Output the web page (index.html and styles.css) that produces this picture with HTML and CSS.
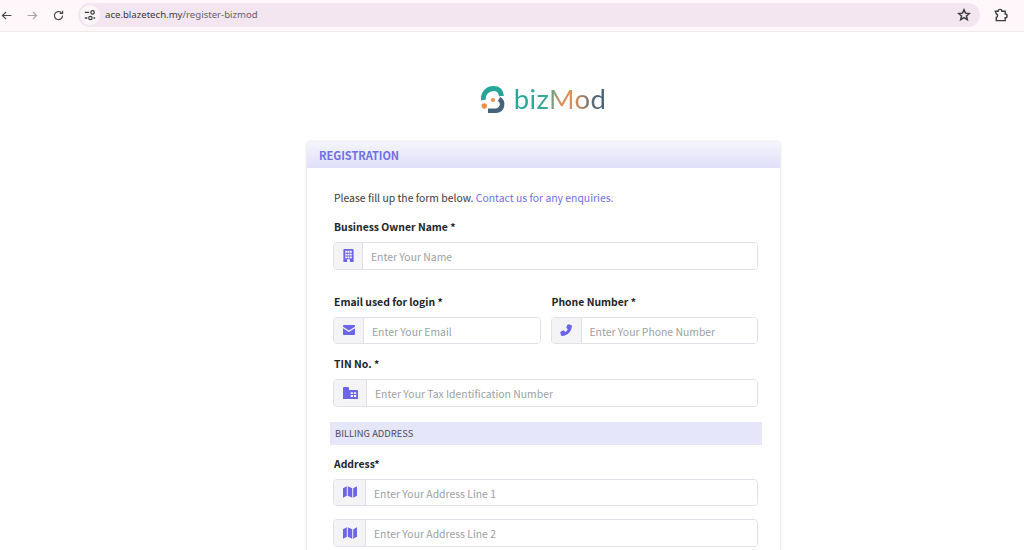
FILE: index.html
```html
<!DOCTYPE html>
<html lang="en">
<head>
  <meta charset="UTF-8">
  <meta name="viewport" content="width=device-width, initial-scale=1.0">
  <title>bizMod Registration</title>
  <link rel="stylesheet" href="styles.css">
</head>
<body>
  <!-- Browser toolbar -->
  <header class="toolbar">
    <svg class="nav-icon" viewBox="0 0 16 16"><path d="M14 8H3M7.500 3.500 3 8l4.500 4.500" fill="none" stroke="#474747" stroke-width="1.500"/></svg>
    <svg class="nav-icon" viewBox="0 0 16 16"><path d="M2 8h11M8.500 3.500 13 8l-4.500 4.500" fill="none" stroke="#a9a5a8" stroke-width="1.500"/></svg>
    <svg class="nav-icon" viewBox="0 0 16 16"><path d="M13 8a5 5 0 1 1-1.500-3.500M13 2v3.500H9.500" fill="none" stroke="#474747" stroke-width="1.500"/></svg>
    <div class="omnibox">
      <span class="site-info">
        <svg viewBox="0 0 14 14" width="12" height="12"><path d="M1 4h5M1 10.500h3M11 10.500h2" stroke="#3c3c3c" stroke-width="1.500" fill="none"/><circle cx="10" cy="4" r="2" fill="none" stroke="#3c3c3c" stroke-width="1.400"/><circle cx="7.500" cy="10.500" r="2" fill="none" stroke="#3c3c3c" stroke-width="1.400"/></svg>
      </span>
      <span class="url">ace.blazetech.my<span class="url-path">/register-bizmod</span></span>
      <svg class="star" viewBox="0 0 16 16" width="14" height="14"><path d="m8 2 1.700 3.900 4.300.4-3.200 2.800 1 4.200L8 11.100l-3.800 2.200 1-4.200L2 6.300l4.300-.4z" fill="none" stroke="#3c3c3c" stroke-width="1.700"/></svg>
    </div>
    <svg class="ext-icon" viewBox="0 0 16 16" width="15" height="15"><path d="M2.500 4.500h3a2 2 0 0 1 4 0h3.500v3a2 2 0 0 1 0 4v3H3.500v-3.500a1.800 1.800 0 0 0 0-3.500z" fill="none" stroke="#3c3c3c" stroke-width="1.500"/></svg>
  </header>

  <main class="page">
    <!-- Logo -->
    <div class="logo">
      <svg class="logo-mark" viewBox="0 0 25 27" width="25" height="27">
        <path d="M2.500 14A10 10 0 0 1 12.500 2.500C17 2.500 20 5 20.500 10" fill="none" stroke="#26a69a" stroke-width="5"/>
        <path d="M7 24.700H15.500A6.300 6.300 0 0 0 18 13" fill="none" stroke="#45647c" stroke-width="4.600"/>
        <circle cx="12" cy="14" r="2.100" fill="#ee8f45"/>
        <circle cx="3.300" cy="20" r="2.700" fill="#ee8f45"/>
      </svg>
      <span class="logo-text">bizMod</span>
    </div>

    <!-- Registration card -->
    <section class="card">
      <h2 class="card-title">REGISTRATION</h2>
      <div class="card-body">
        <p class="intro">Please fill up the form below. <a href="#">Contact us for any enquiries.</a></p>

        <div class="field name-field">
          <label>Business Owner Name *</label>
          <div class="input-group">
            <span class="addon"><svg viewBox="0 0 11 14" width="11" height="13"><path fill-rule="evenodd" d="M1 0h9a1 1 0 0 1 1 1v13H7v-3H4v3H0V1a1 1 0 0 1 1-1zm1 2v2h2V2zm2.500 0v2h2V2zM7 2v2h2V2zM2 5v2h2V5zm2.500 0v2h2V5zM7 5v2h2V5zM2 8v2h2V8zm2.500 0v2h2V8zM7 8v2h2V8z"/></svg></span>
            <input type="text" placeholder="Enter Your Name">
          </div>
        </div>

        <div class="field-row">
          <div class="field">
            <label>Email used for login *</label>
            <div class="input-group">
              <span class="addon"><svg viewBox="0 0 12 10" width="12" height="10"><path d="M1 0h10a1 1 0 0 1 1 1v.8L6 5.600 0 1.800V1a1 1 0 0 1 1-1zM0 3.200l6 3.800 6-3.800V9a1 1 0 0 1-1 1H1a1 1 0 0 1-1-1z"/></svg></span>
              <input type="text" placeholder="Enter Your Email">
            </div>
          </div>
          <div class="field">
            <label>Phone Number *</label>
            <div class="input-group">
              <span class="addon"><svg viewBox="0 0 12 12" width="12" height="12"><path d="M8.300.3 11 .9c.6.2 1 .7.9 1.300C11.500 7.500 7.500 11.600 2.200 12c-.6 0-1.100-.3-1.300-.9L.3 8.500c-.1-.4.100-.8.500-1l2.500-1.100c.3-.1.700 0 .9.300l1.100 1.300a8 8 0 0 0 2.600-2.700L6.600 4.200a.8.800 0 0 1-.2-.9L7.400.8c.2-.4.500-.6.900-.5z"/></svg></span>
              <input type="text" placeholder="Enter Your Phone Number">
            </div>
          </div>
        </div>

        <div class="field">
          <label>TIN No. *</label>
          <div class="input-group">
            <span class="addon"><svg viewBox="0 0 15 12" width="15" height="12"><path fill-rule="evenodd" d="M1 0h4a1 1 0 0 1 1 1v2h8a1 1 0 0 1 1 1v8H0V1a1 1 0 0 1 1-1zm6.700 5.200v1.900h2.200V5.200zm3.200 0v1.900h2.300V5.200zM7.700 8v1.900h2.200V8zm3.200 0v1.900h2.300V8z"/></svg></span>
            <input type="text" placeholder="Enter Your Tax Identification Number">
          </div>
        </div>

        <div class="section-bar">BILLING ADDRESS</div>

        <div class="field">
          <label>Address*</label>
          <div class="input-group">
            <span class="addon"><svg viewBox="0 0 14 12" width="14" height="12"><path d="M0 2.200 3.800.3v9.500L0 11.700zM4.800.3l4.400 1.900v9.500L4.800 9.800zM10.200 2.200 14 .3v9.500l-3.800 1.900z"/></svg></span>
            <input type="text" placeholder="Enter Your Address Line 1">
          </div>
          <div class="input-group second-line">
            <span class="addon"><svg viewBox="0 0 14 12" width="14" height="12"><path d="M0 2.200 3.800.3v9.500L0 11.700zM4.800.3l4.400 1.900v9.500L4.800 9.800zM10.200 2.200 14 .3v9.500l-3.800 1.900z"/></svg></span>
            <input type="text" placeholder="Enter Your Address Line 2">
          </div>
        </div>
      </div>
    </section>
  </main>
</body>
</html>
```

FILE: styles.css
```css
/* General Styles */
html,
body {
  height: 550px;
  overflow: hidden;
}

body {
  margin: 0;
  background: #fff;
  color: #212529;
  font-family: "Noto Sans CJK SC", "Open Sans", sans-serif;
  font-size: 10.4px;
}

/* Browser toolbar */
.toolbar {
  display: flex;
  align-items: center;
  height: 31px;
  padding: 0 16px 0 0;
  background: #fff7f9;
  border-bottom: 1px solid #f1e8ec;
}

.nav-icon {
  width: 13px;
  height: 13px;
  margin-right: 13px;
}

.omnibox {
  display: flex;
  align-items: center;
  flex: 1;
  height: 24px;
  margin-top: -2px;
  padding: 0 9px 0 2px;
  background: #f3e6f0;
  border-radius: 12px;
}

.site-info {
  display: flex;
  align-items: center;
  justify-content: center;
  width: 20px;
  height: 20px;
  background: #fdf6f9;
  border-radius: 50%;
}

.url {
  flex: 1;
  margin-left: 5px;
  font-family: "Noto Sans", sans-serif;
  font-size: 9.6px;
  color: #3a3a3a;
  line-height: 16px;
}

.url-path {
  color: #66626a;
}

.ext-icon {
  margin: -2px 0 0 13px;
}

/* Page offset */
.page {
  padding-left: 63px;
}

/* Logo */
.logo {
  display: flex;
  align-items: center;
  justify-content: center;
  gap: 8px;
  height: 30px;
  margin-top: 52px;
}

.logo-text {
  font-family: "Lato", sans-serif;
  font-size: 27.5px;
  line-height: 30px;
  letter-spacing: 0.4px;
  background: linear-gradient(90deg, #26a69a 0%, #3aa898 36%, #e0905a 52%, #d8915a 66%, #45647c 90%);
  -webkit-background-clip: text;
  background-clip: text;
  color: transparent;
}

/* Registration card */
.card {
  width: 473px;
  height: 500px;
  margin: 28px auto 0;
  background: #fff;
  border-radius: 4px;
  box-shadow: 0 0 3px rgba(60, 60, 90, 0.25);
}

.card-title {
  margin: 0;
  height: 26px;
  padding: 0 12px;
  background: linear-gradient(#f5f5fd, #dfdff8);
  border-radius: 4px 4px 0 0;
  color: #6f6fe6;
  font-size: 11px;
  font-weight: 700;
  line-height: 26px;
}

.card-body {
  padding: 20px 23px 0 27px;
}

.intro {
  margin: 0 0 9px;
  font-size: 10.4px;
  line-height: 20px;
  color: #3a3a3a;
}

.intro a {
  color: #6f6fe6;
  text-decoration: none;
}

/* Form fields */
.field label {
  display: block;
  margin-bottom: 5px;
  font-size: 10.4px;
  font-weight: 700;
  line-height: 20px;
  color: #212529;
}

.name-field {
  margin-bottom: 22px;
}

.field-row {
  display: grid;
  grid-template-columns: 1fr 1fr;
  gap: 12px;
  margin-bottom: 10px;
}

.input-group {
  display: flex;
  height: 27.5px;
  margin: 0 -1px;
  box-sizing: border-box;
  border: 1px solid #dee2e6;
  border-radius: 4px;
  overflow: hidden;
}

.input-group.second-line {
  margin-top: 13px;
}

.addon {
  display: flex;
  align-items: center;
  padding: 0 8.500px;
  background: #f4f4f6;
  border-right: 1px solid #dee2e6;
}

.addon svg {
  fill: #6c65ec;
}

.input-group input {
  flex: 1;
  min-width: 0;
  padding: 2px 8px 0;
  border: 0;
  outline: 0;
  font-family: inherit;
  font-size: 10.4px;
}

.input-group input::placeholder {
  color: #9b9fa5;
  opacity: 1;
}

.section-bar {
  height: 23px;
  margin: 15px -5px 9px -4px;
  padding: 0 5px;
  background: #e6e6fa;
  color: #4b4b55;
  font-size: 9.4px;
  line-height: 23px;
}
```
